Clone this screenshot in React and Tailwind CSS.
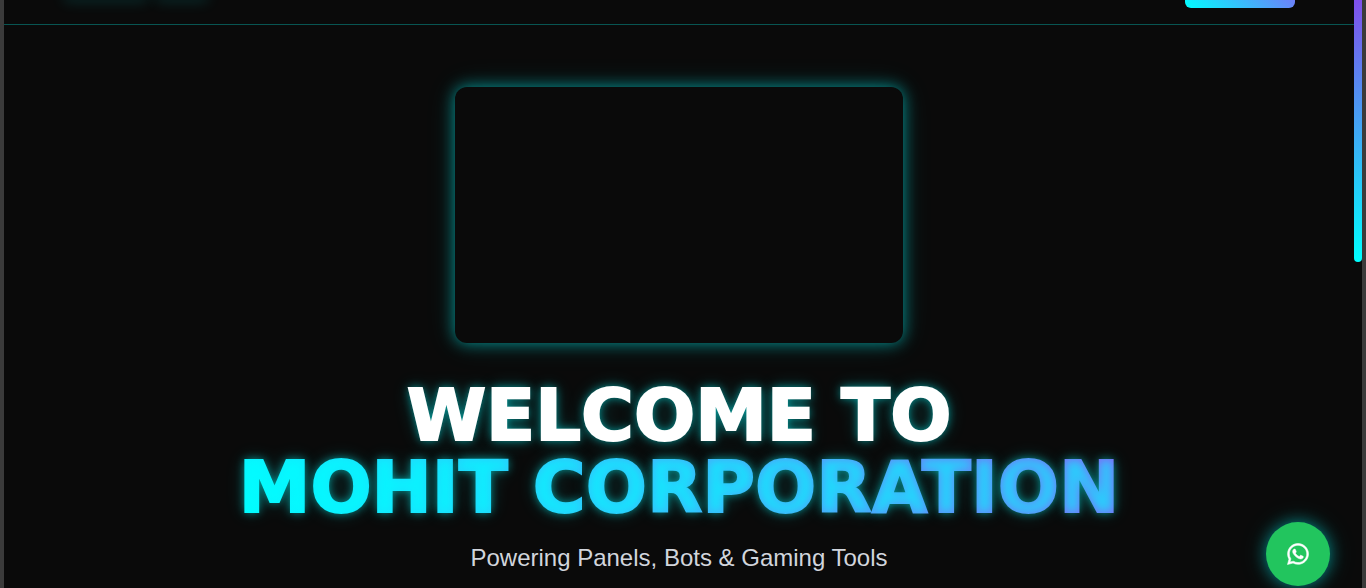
import { FaWhatsapp } from "react-icons/fa";

function Header() {
  return (
    <header className="flex h-[25px] items-start justify-between overflow-hidden border-b border-[#085552] pr-[59px] pl-[62px]">
      <a href="#home" aria-label="Home" className="flex gap-3">
        <span className="h-0 w-20 shadow-[0_-2px_14px_2px_rgba(0,255,255,0.3)]" />
        <span className="h-0 w-12 shadow-[0_-2px_14px_2px_rgba(0,255,255,0.3)]" />
      </a>
      <button
        type="button"
        aria-label="Menu"
        className="-mt-8 h-10 w-[110px] rounded-md bg-[linear-gradient(45deg,#00ffff,#8b5cf6)]"
      />
    </header>
  );
}

function Hero() {
  return (
    <main className="flex flex-col items-center px-4 pt-[62px] text-center">
      <div className="h-64 w-full max-w-md rounded-xl bg-[#0a0a0a] shadow-[0_0_15px_rgba(0,255,255,0.5),0_0_30px_rgba(0,255,255,0.15)]" />
      <h1 className="mt-9 font-['DejaVu_Sans',sans-serif] text-7xl leading-[72px] font-bold whitespace-nowrap text-white [text-shadow:0_0_10px_rgba(0,255,255,0.6),0_0_20px_rgba(0,255,255,0.2)]">
        <span className="block [-webkit-text-stroke:2px_white]">WELCOME TO</span>
        <span className="block bg-[linear-gradient(45deg,#00ffff,#8b5cf6)] bg-clip-text text-transparent [-webkit-text-stroke:2px_transparent]">
          MOHIT CORPORATION
        </span>
      </h1>
      <p className="mt-[19px] text-2xl whitespace-nowrap text-gray-300">
        Powering Panels, Bots &amp; Gaming Tools
      </p>
    </main>
  );
}

export default function App() {
  return (
    <div className="relative flex h-screen overflow-hidden border-x-4 border-[#3b3b3b] bg-[#0a0a0a] font-['Liberation_Sans',Arial,sans-serif]">
      <div className="min-w-0 flex-1">
        <Header />
        <Hero />
      </div>
      <div className="w-2 shrink-0">
        <div className="h-[262px] rounded-b-full bg-[linear-gradient(to_top,#00ffff,#8050eb)]" />
      </div>
      <a
        href="#whatsapp"
        aria-label="WhatsApp"
        className="absolute right-8 bottom-0.5 flex size-16 items-center justify-center rounded-full bg-[#22c55e] text-white shadow-[0_0_15px_rgba(0,255,255,0.45),0_0_30px_rgba(0,255,255,0.15)]"
      >
        <FaWhatsapp className="size-6" strokeWidth="12" />
      </a>
    </div>
  );
}
